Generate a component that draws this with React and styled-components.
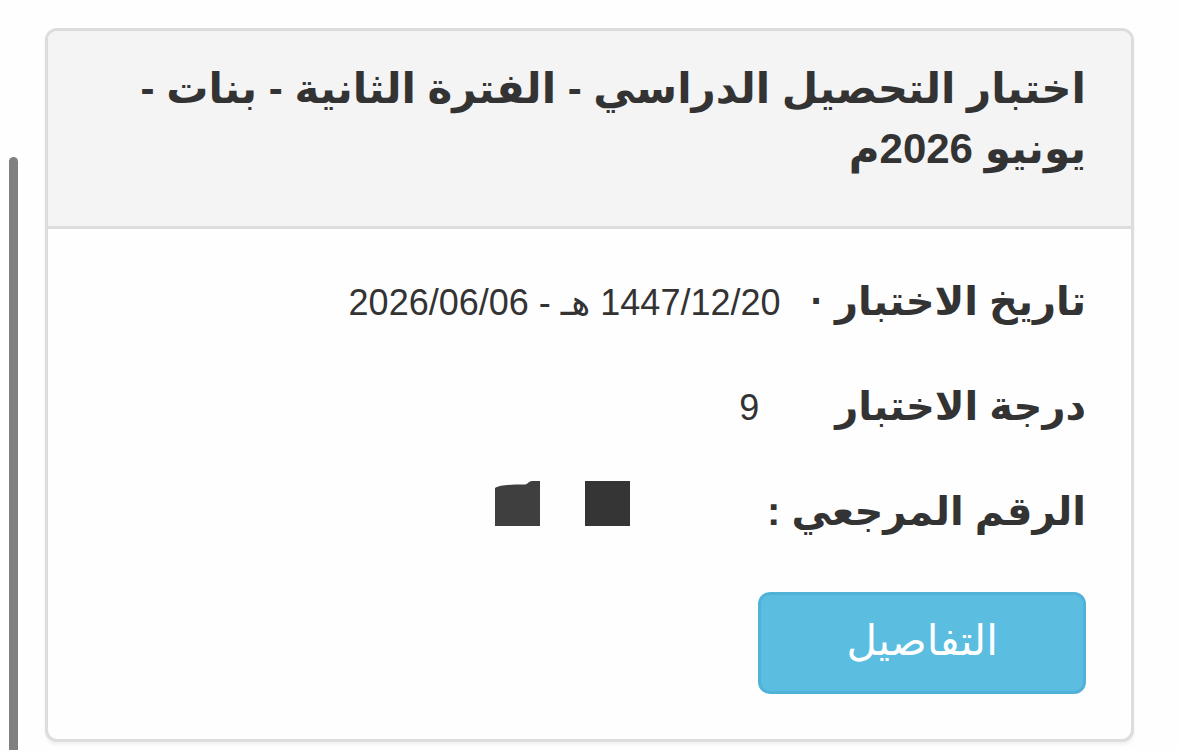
import React from 'react';
import styled, { createGlobalStyle } from 'styled-components';

const App = () => {
    return (
        <Page dir="rtl" lang="ar">
            <GlobalStyle />
            <Card>
                <CardHeader>
                    <Title>اختبار التحصيل الدراسي - الفترة الثانية - بنات - يونيو 2026م</Title>
                </CardHeader>
                <CardBody>
                    <InfoList>
                        <InfoRow $gap="30px">
                            <Label>تاريخ الاختبار ·</Label>
                            <Value>1447/12/20 هـ - 2026/06/06</Value>
                        </InfoRow>
                        <InfoRow $gap="76px">
                            <Label>درجة الاختبار</Label>
                            <Value>9</Value>
                        </InfoRow>
                        <InfoRow $gap="137px">
                            <Label>الرقم المرجعي :</Label>
                            <HiddenNumber>
                                <Block viewBox="0 0 45 45" aria-hidden="true">
                                    <path d="M0 0H45V45H0Z" fill="#353535" />
                                </Block>
                                <Block viewBox="0 0 45 45" aria-hidden="true">
                                    <path d="M0 7C5 4 12 3.5 30 3.5C33 3 34 0 37 0H45V45H0Z" fill="#3f3f3f" />
                                </Block>
                            </HiddenNumber>
                        </InfoRow>
                    </InfoList>
                    <DetailsButton type="button">التفاصيل</DetailsButton>
                </CardBody>
            </Card>
            <ScrollTrack>
                <ScrollThumb />
            </ScrollTrack>
        </Page>
    );
};

const GlobalStyle = createGlobalStyle`
    * {
        box-sizing: border-box;
    }
    body {
        margin: 0;
        background: #fefefe;
        color: #333;
        font-family: 'Liberation Sans', 'DejaVu Sans', sans-serif;
    }
`;

const Page = styled.div`
    display: flex;
    align-items: flex-start;
    gap: 27px;
    height: 100vh;
    padding: 0 45px 0 9px;
    overflow: hidden;
`;

const Card = styled.section`
    flex: 1;
    min-width: 0;
    margin-top: 28px;
    border: 3px solid #ddd;
    border-radius: 12px;
    background: #fefefe;
    box-shadow: 0 3px 3px rgba(0, 0, 0, .05);
    overflow: hidden;
`;

const CardHeader = styled.header`
    padding: 28px 45px 47px;
    border-bottom: 3px solid #ddd;
    background: #f4f4f4;
`;

const Title = styled.h3`
    margin: 0;
    font-size: 42px;
    line-height: 60px;
    font-weight: 700;
`;

const CardBody = styled.div`
    padding: 42px 45px 45px;
`;

const InfoList = styled.dl`
    display: grid;
    grid-auto-rows: 60px;
    gap: 45px;
    margin: 0 0 51px;
`;

const InfoRow = styled.div`
    display: flex;
    align-items: baseline;
    gap: ${({ $gap }) => $gap};
`;

const Label = styled.dt`
    font-size: 40px;
    line-height: 60px;
    font-weight: 700;
`;

const Value = styled.dd`
    margin: 0;
    font-size: 36px;
    line-height: 60px;
`;

const HiddenNumber = styled.dd`
    display: flex;
    align-self: flex-start;
    gap: 45px;
    margin: 0;
`;

const Block = styled.svg`
    display: block;
    width: 45px;
    height: 45px;
`;

const DetailsButton = styled.button`
    display: block;
    width: 33%;
    padding: 16px 18px 20px;
    border: 3px solid #50b2d6;
    border-radius: 12px;
    background: #5bbee0;
    color: #fff;
    font-family: inherit;
    font-size: 42px;
    line-height: 60px;
    cursor: pointer;
`;

const ScrollTrack = styled.div`
    width: 9px;
    height: 100%;
    padding-top: 157px;
`;

const ScrollThumb = styled.div`
    height: 100%;
    border-radius: 5px 5px 0 0;
    background: #808080;
`;

export default App;
